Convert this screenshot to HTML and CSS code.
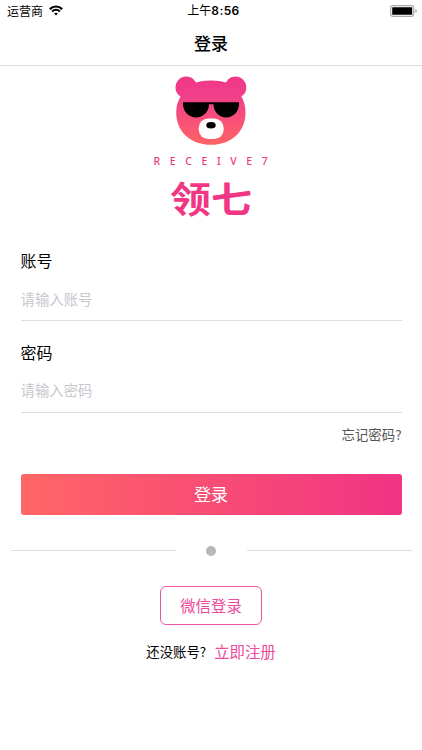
FILE: index.html
```html
<!DOCTYPE html>
<html lang="zh-CN">
<head>
<meta charset="utf-8">
<title>登录</title>
<link rel="stylesheet" href="styles.css">
</head>
<body>
<header class="header">
  <div class="status">
    <div class="carrier"><span>运营商</span>
      <svg class="wifi" width="14" height="11" viewBox="0 0 14 11" fill="none" stroke="#000" stroke-width="2.2"><path d="M.8 4.1C4.400.6 9.600.6 13.200 4.1"/><path d="M3.100 6.500c2.300-2.100 5.500-2.100 7.800 0"/><path d="M5 8.300c1.200-.9 2.800-.9 4 0L7 10.400z" fill="#000" stroke="none"/></svg>
    </div>
    <div class="time">上午<b>8:56</b></div>
    <svg class="battery" width="28" height="12" viewBox="0 0 28 12"><rect x=".7" y=".7" width="23" height="10.6" rx="2.2" fill="#fff" stroke="#aaa" stroke-width="1.2"/><rect x="2.2" y="2.2" width="20" height="7.6" rx=".6"/><path d="M25.2 4.2q1.8.3 1.8 1.8t-1.8 1.8z" fill="#aaa"/></svg>
  </div>
  <h1 class="title">登录</h1>
</header>
<main class="main">
  <div class="brand">
    <svg class="bear" width="72" height="70" viewBox="0 0 72 70">
      <defs><linearGradient id="fur" gradientUnits="userSpaceOnUse" x1="0" y1="0" x2="0" y2="70"><stop offset="0" stop-color="#f13688"/><stop offset=".3" stop-color="#f1408a"/><stop offset="1" stop-color="#ff6464"/></linearGradient></defs>
      <g fill="url(#fur)"><circle cx="11.3" cy="11.4" r="10.8"/><circle cx="60.5" cy="11.4" r="10.8"/><path d="M36 4.500C50 4.500 60 8.500 66 20c3.200 5 4.500 10 4.500 16.500C70.500 57 55 68.800 36 68.800S1.200 57 1.200 36.500C1.200 30 2.800 25 6 20 12 8.500 22 4.500 36 4.500z"/></g>
      <path d="M8 26.200h56v1.800c0 7.400-5.400 13.400-12.600 13.400S38.500 35.800 38.500 28.200h-4.500c0 7.600-6 13.200-13.200 13.200S8 35.400 8 28z"/>
      <rect x="23.700" y="42.500" width="25" height="20.500" rx="9.500" fill="#fff"/>
      <ellipse cx="36" cy="49.300" rx="4.700" ry="3.200"/>
    </svg>
    <div class="latin">RECEIVE7</div>
    <div class="name">领七</div>
  </div>
  <form class="form">
    <label class="label" for="account">账号</label>
    <input class="input" id="account" type="text" placeholder="请输入账号">
    <label class="label second" for="password">密码</label>
    <input class="input" id="password" type="password" placeholder="请输入密码">
    <a class="forgot">忘记密码?</a>
    <button class="submit" type="button">登录</button>
  </form>
  <div class="divider"><i class="rule"></i><i class="dot"></i><i class="rule"></i></div>
  <button class="wechat" type="button">微信登录</button>
  <div class="signup"><span>还没账号?</span><a class="register">立即注册</a></div>
</main>
</body>
</html>
```

FILE: styles.css
```css
* { box-sizing: border-box; }
body {
  margin: 0;
  background: #fff;
  color: #000;
  font-family: "Noto Sans CJK SC", sans-serif;
}
button, input { font-family: inherit; padding: 0; margin: 0; }
.header { height: 66px; border-bottom: 1px solid #dcdcdc; }
.status {
  display: grid;
  grid-template-columns: 1fr auto 1fr;
  align-items: center;
  height: 21px;
  padding: 0 4px 0 7px;
  font-size: 12px;
  line-height: 20px;
}
.carrier { display: flex; align-items: center; gap: 6px; }
.time { display: flex; padding-left: 2px; }
.time b { font: 600 12px/21px Inter, sans-serif; letter-spacing: .4px; }
.battery { justify-self: end; }
.title {
  margin: 0;
  font-size: 17px;
  font-weight: 500;
  line-height: 24px;
  text-align: center;
  padding-top: 10px;
}
.main { display: flex; flex-direction: column; align-items: center; }
.brand {
  display: flex;
  flex-direction: column;
  align-items: center;
  height: 182px;
  padding-top: 10px;
}
.bear { display: block; }
.latin {
  margin-top: 8px;
  font: 500 10.5px/14px "Noto Sans", sans-serif;
  letter-spacing: 9.6px;
  padding-left: 9px;
  color: #ee3984;
}
.name {
  margin-top: 1px;
  font-size: 41px;
  font-weight: 700;
  line-height: 56px;
  color: #f13684;
  transform: scaleY(.9);
}
.form { display: flex; flex-direction: column; width: 381px; }
.label { font-size: 16px; line-height: 24px; }
.second { margin-top: 19px; }
.input {
  width: 100%;
  height: 49px;
  border: 0;
  border-bottom: 1px solid #dedede;
  outline: 0;
  background: none;
  font-size: 14.4px;
  padding-top: 4px;
}
#password { padding-top: 3px; }
.input::placeholder { color: #c7c7cd; opacity: 1; }
.forgot {
  align-self: flex-end;
  margin-top: 11px;
  font-size: 13.4px;
  line-height: 20px;
  color: #555;
}
.submit {
  height: 41px;
  margin-top: 30px;
  padding-bottom: 2px;
  border: 0;
  border-radius: 3px;
  background: linear-gradient(90deg, #ff6666, #f13384);
  color: #fff;
  font-size: 17px;
}
.divider {
  display: flex;
  align-items: center;
  justify-content: space-between;
  width: 401px;
  height: 11px;
  margin-top: 30px;
}
.rule { width: 165px; height: 1px; background: #dedede; }
.dot { width: 10px; height: 10px; border-radius: 50%; background: #b8b8b8; }
.wechat {
  width: 102px;
  height: 39px;
  margin-top: 30px;
  padding-bottom: 2px;
  border: 1px solid #ed55a0;
  border-radius: 6px;
  background: #fff;
  color: #ed4a9b;
  font-size: 15.4px;
}
.signup {
  display: flex;
  align-items: center;
  gap: 8px;
  margin-top: 14px;
  font-size: 13.4px;
  line-height: 24px;
}
.register { font-size: 15.4px; color: #ed4a9b; }
```
